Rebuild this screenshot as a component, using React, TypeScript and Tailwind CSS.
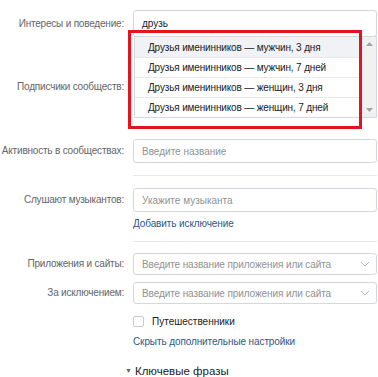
import React from "react";

const font = { fontFamily: '"Liberation Sans", Arial, sans-serif' };

function Label({ children }: { children: React.ReactNode }) {
  return (
    <div className="w-[124px] shrink-0 text-right whitespace-nowrap text-[10px] tracking-[-0.2px] leading-[14px] text-[#656565]">
      {children}
    </div>
  );
}

function Chevron() {
  return (
    <svg width="10" height="6" viewBox="0 0 10 6" className="absolute right-[6px] top-1/2 -translate-y-1/2">
      <path d="M1 1l4 4 4-4" fill="none" stroke="#b5bbc3" strokeWidth="1" />
    </svg>
  );
}

export default function App() {
  const items = [
    "Друзья именинников — мужчин, 3 дня",
    "Друзья именинников — мужчин, 7 дней",
    "Друзья именинников — женщин, 3 дня",
    "Друзья именинников — женщин, 7 дней",
  ];
  return (
    <div className="relative w-[378px] h-[377px] overflow-hidden bg-white whitespace-nowrap" style={font}>
      <div className="flex flex-col pt-[10px]">
        <div className="flex items-center gap-[9px] h-[27px]">
          <Label>Интересы и поведение:</Label>
          <div className="flex-1 h-[27px] mr-[1px] border border-[#d3d9de] rounded-[3px] flex items-center pl-[8px] text-[10px] text-[#222]">
            друзь
          </div>
        </div>
        <div className="flex items-center gap-[9px] h-[24px] mt-[38px]">
          <Label>Подписчики сообществ:</Label>
        </div>
        <div className="flex items-center gap-[9px] h-[24px] mt-[40px]">
          <Label>Активность в сообществах:</Label>
          <div className="flex-1 h-[24px] mr-[1px] border border-[#d3d9de] rounded-[3px] flex items-center pl-[8px] text-[10px] text-[#929292]">
            Введите название
          </div>
        </div>
        <div className="ml-[133px] mr-[1px] h-px bg-[#e7e8ec] mt-[12px]" />
        <div className="flex items-center gap-[9px] h-[24px] mt-[12px]">
          <Label>Слушают музыкантов:</Label>
          <div className="flex-1 h-[24px] mr-[1px] border border-[#d3d9de] rounded-[3px] flex items-center pl-[8px] text-[10px] text-[#929292]">
            Укажите музыканта
          </div>
        </div>
        <div className="ml-[133px] mt-[5px] text-[10px] tracking-[-0.1px] leading-[14px] text-[#2a5885]">Добавить исключение</div>
        <div className="ml-[133px] mr-[1px] h-px bg-[#e7e8ec] mt-[10px]" />
        <div className="flex items-center gap-[9px] h-[22px] mt-[11px]">
          <Label>Приложения и сайты:</Label>
          <div className="relative flex-1 h-[22px] mr-[1px] border border-[#d3d9de] rounded-[3px] flex items-center pl-[8px] text-[10px] tracking-[-0.1px] text-[#929292]">
            Введите название приложения или сайта
            <Chevron />
          </div>
        </div>
        <div className="flex items-center gap-[9px] h-[22px] mt-[7px]">
          <Label>За исключением:</Label>
          <div className="relative flex-1 h-[22px] mr-[1px] border border-[#d3d9de] rounded-[3px] flex items-center pl-[8px] text-[10px] tracking-[-0.1px] text-[#929292]">
            Введите название приложения или сайта
            <Chevron />
          </div>
        </div>
        <div className="ml-[133px] mt-[12px] flex items-center gap-[8px] h-[11px]">
          <div className="w-[11px] h-[11px] border border-[#c5ccd3] rounded-[2px]" />
          <span className="text-[10px] leading-[14px] text-[#222]">Путешественники</span>
        </div>
        <div className="ml-[133px] mt-[8px] text-[10px] tracking-[-0.1px] leading-[14px] text-[#2a5885]">Скрыть дополнительные настройки</div>
        <div className="ml-[125px] mt-[14px] flex items-center gap-[3px]">
          <span className="text-[7px] text-[#656565]">▼</span>
          <span className="text-[11.5px] leading-[16px] text-[#222]">Ключевые фразы</span>
        </div>
      </div>

      <div className="absolute left-[134px] top-[36px] w-[243px] h-[82px] border border-[#d3d9de] bg-white flex">
        <div className="flex-1 flex flex-col">
          {items.map((t, i) => (
            <div
              key={i}
              className={
                "h-[20px] flex items-center pl-[13px] text-[10px] tracking-[-0.15px] text-[#222] " +
                (i > 0 ? "border-t border-[#e7e8ec] " : "") +
                (i === 0 ? "bg-[#f0f2f5]" : "")
              }
            >
              {t}
            </div>
          ))}
        </div>
        <div className="w-[14px] bg-[#f1f1f1] flex flex-col justify-between items-center py-[5px]">
          <svg width="7" height="4" viewBox="0 0 7 4"><path d="M0 4L3.5 0L7 4Z" fill="#a3a3a3" /></svg>
          <svg width="7" height="4" viewBox="0 0 7 4"><path d="M0 0L3.5 4L7 0Z" fill="#a3a3a3" /></svg>
        </div>
      </div>

      <div className="absolute left-[128px] top-[30px] w-[234px] h-[99px] border-[3px] border-[#e3141b]" />
    </div>
  );
}
